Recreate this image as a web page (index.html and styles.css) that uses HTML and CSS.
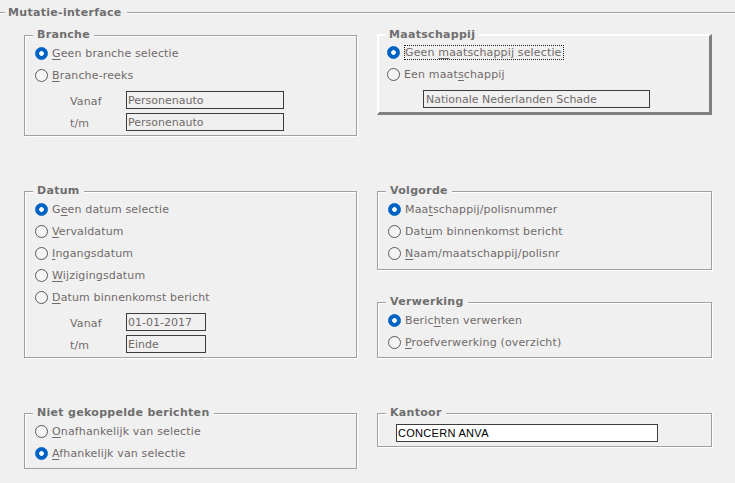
FILE: index.html
```html
<!DOCTYPE html>
<html lang="nl">
<head>
  <meta charset="UTF-8">
  <title>Mutatie-interface</title>
  <link rel="stylesheet" href="styles.css">
</head>
<body>

<div class="frame-title"><span>Mutatie-interface</span></div>

<div class="grid">

  <!-- Branche -->
  <fieldset class="group">
    <legend>Branche</legend>
    <label class="opt"><input type="radio" name="branche" checked><span><u>G</u>een branche selectie</span></label>
    <label class="opt"><input type="radio" name="branche"><span><u>B</u>ranche-reeks</span></label>
    <div class="range">
      <span class="range-label">Vanaf</span><input class="field wide" type="text" value="Personenauto" readonly>
      <span class="range-label">t/m</span><input class="field wide" type="text" value="Personenauto" readonly>
    </div>
  </fieldset>

  <!-- Maatschappij -->
  <fieldset class="group raised">
    <legend>Maatschappij</legend>
    <label class="opt"><input type="radio" name="mij" checked><span class="focus">Geen <u>m</u>aatschappij selectie</span></label>
    <label class="opt"><input type="radio" name="mij"><span>Een maat<u>s</u>chappij</span></label>
    <input class="field mij" type="text" value="Nationale Nederlanden Schade" readonly>
  </fieldset>

  <!-- Datum -->
  <fieldset class="group">
    <legend>Datum</legend>
    <label class="opt"><input type="radio" name="datum" checked><span>G<u>e</u>en datum selectie</span></label>
    <label class="opt"><input type="radio" name="datum"><span><u>V</u>ervaldatum</span></label>
    <label class="opt"><input type="radio" name="datum"><span><u>I</u>ngangsdatum</span></label>
    <label class="opt"><input type="radio" name="datum"><span><u>W</u>ijzigingsdatum</span></label>
    <label class="opt"><input type="radio" name="datum"><span><u>D</u>atum binnenkomst bericht</span></label>
    <div class="range">
      <span class="range-label">Vanaf</span><input class="field short" type="text" value="01-01-2017" readonly>
      <span class="range-label">t/m</span><input class="field short" type="text" value="Einde" readonly>
    </div>
  </fieldset>

  <div class="stack">
    <!-- Volgorde -->
    <fieldset class="group volgorde">
      <legend>Volgorde</legend>
      <label class="opt"><input type="radio" name="volgorde" checked><span>Maa<u>t</u>schappij/polisnummer</span></label>
      <label class="opt"><input type="radio" name="volgorde"><span>Dat<u>u</u>m binnenkomst bericht</span></label>
      <label class="opt"><input type="radio" name="volgorde"><span><u>N</u>aam/maatschappij/polisnr</span></label>
    </fieldset>

    <!-- Verwerking -->
    <fieldset class="group">
      <legend>Verwerking</legend>
      <label class="opt"><input type="radio" name="verwerking" checked><span>Beric<u>h</u>ten verwerken</span></label>
      <label class="opt"><input type="radio" name="verwerking"><span><u>P</u>roefverwerking (overzicht)</span></label>
    </fieldset>
  </div>

  <!-- Niet gekoppelde berichten -->
  <fieldset class="group">
    <legend>Niet gekoppelde berichten</legend>
    <label class="opt"><input type="radio" name="niet"><span><u>O</u>nafhankelijk van selectie</span></label>
    <label class="opt"><input type="radio" name="niet" checked><span><u>A</u>fhankelijk van selectie</span></label>
  </fieldset>

  <!-- Kantoor -->
  <fieldset class="group">
    <legend>Kantoor</legend>
    <input class="field kantoor" type="text" value="CONCERN ANVA" readonly>
  </fieldset>

</div>

</body>
</html>
```

FILE: styles.css
```css
body {
  margin: 0;
  background: #f0f0f0;
  font-family: "DejaVu Sans", Verdana, sans-serif;
  font-size: 11px;
  letter-spacing: 0.15px;
  color: #706a6a;
}
.frame-title {
  display: flex;
  align-items: center;
  height: 25px;
}
.frame-title::before,
.frame-title::after {
  content: "";
  border-top: 1px solid #a0a0a0;
  border-bottom: 1px solid #fff;
}
.frame-title::before {
  width: 5px;
}
.frame-title::after {
  flex: 1;
}
.frame-title span {
  padding: 0 5px 0 3px;
  font-weight: bold;
  letter-spacing: 0.3px;
  color: #6e6e6e;
  line-height: 12px;
}
.grid {
  display: grid;
  grid-template-columns: 333px 335px;
  column-gap: 20px;
  row-gap: 49px;
  padding: 4px 0 0 24px;
  align-items: start;
}
.stack {
  display: flex;
  flex-direction: column;
  gap: 26px;
}
.group {
  margin: 0;
  padding: 1px 0 4px 10px;
  min-width: 0;
  border: 1px solid #a0a0a0;
  box-shadow: inset 1px 1px #fff, 1px 1px #fff;
}
.group legend {
  margin-left: -2px;
  padding: 0 4px;
  line-height: 12px;
  font-weight: bold;
  letter-spacing: 0.3px;
  color: #6e6e6e;
  background: #f0f0f0;
}
.volgorde {
  padding-bottom: 5px;
}
.raised {
  padding: 0 0 4px 8px;
  border-width: 2px 3px 3px 2px;
  border-color: #fff #808080 #808080 #fff;
  box-shadow: none;
}
.opt {
  display: flex;
  align-items: center;
  height: 22px;
}
.opt input {
  appearance: none;
  flex: none;
  width: 13px;
  height: 13px;
  margin: 0 4px 0 0;
  border: 1px solid #5a5a5a;
  border-radius: 50%;
  background: #f4f4f4;
}
.opt input:checked {
  border-color: #0063c4;
  background: radial-gradient(circle, #fff 0 2px, #0063c4 2.6px);
}
.opt span {
  line-height: 13px;
}
u {
  text-underline-offset: 2px;
}
.focus {
  border: 1px dotted #222;
  padding-right: 1px;
}
.range {
  display: grid;
  grid-template-columns: 56px auto;
  row-gap: 4px;
  margin: 5px 0 0 35px;
}
.range-label {
  display: flex;
  align-items: flex-end;
  height: 18px;
  line-height: 14px;
}
.field {
  box-sizing: border-box;
  height: 18px;
  margin: 0;
  padding: 0 1px;
  border: 1px solid #3c3c3c;
  background: transparent;
  font: inherit;
  color: #706a6a;
  outline: none;
}
.wide {
  width: 158px;
}
.short {
  width: 80px;
}
.mij {
  display: block;
  width: 227px;
  margin: 5px 0 0 36px;
  padding-left: 2px;
}
.kantoor {
  display: block;
  width: 262px;
  margin: 4px 0 0 8px;
  background: #fff;
  color: #000;
  font-family: "Liberation Sans", Arial, sans-serif;
  letter-spacing: 0.3px;
}
```
